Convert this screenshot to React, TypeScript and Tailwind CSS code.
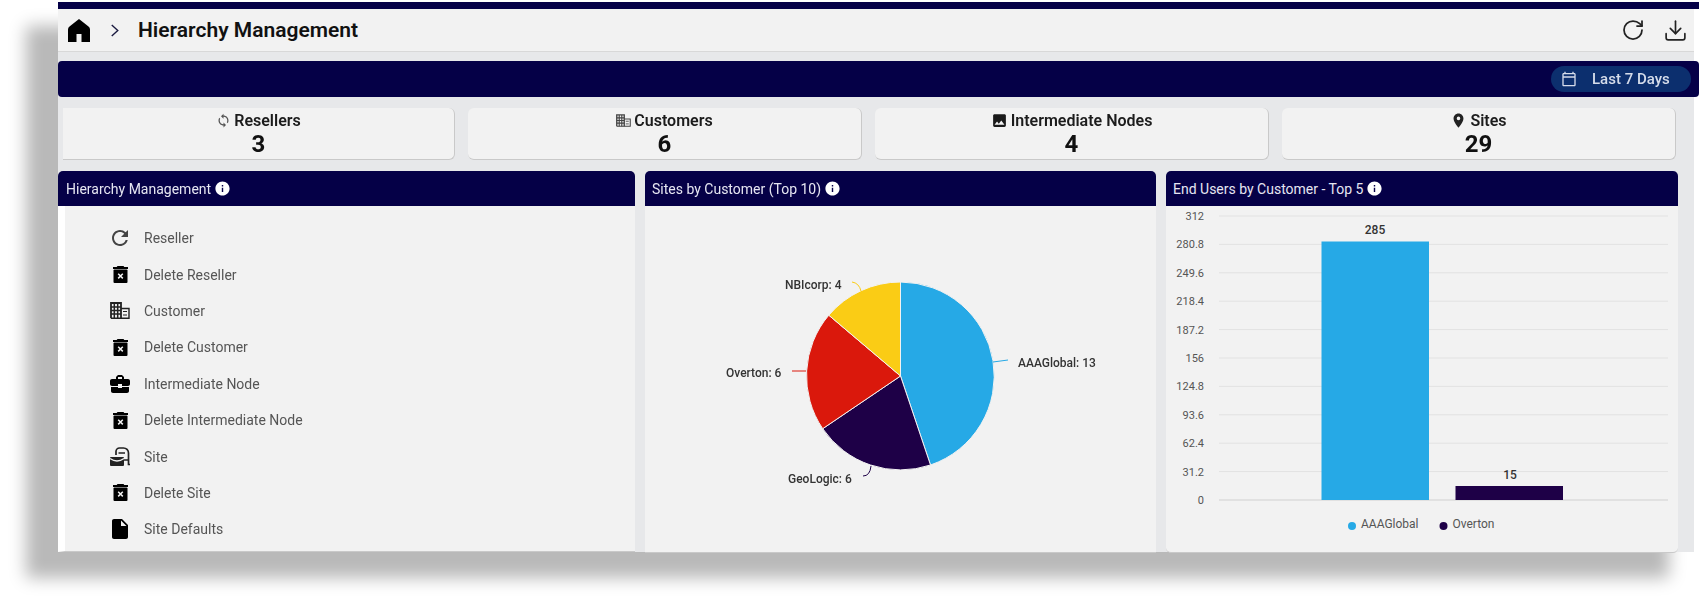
import React from 'react';
import { Download, RotateCw } from 'lucide-react';
import {
  MdBusinessCenter,
  MdInfo,
  MdInsertDriveFile,
  MdInsertPhoto,
  MdOutlineCalendarToday,
  MdPlace,
  MdRefresh,
  MdSync,
} from 'react-icons/md';

const BuildingIcon = ({ className }: { className?: string }) => (
  <svg viewBox="0 0 20 17" className={className} fill="none" stroke="currentColor">
    <path d="M1 16.200V1h10v15.200" strokeWidth="1.800" />
    <path d="M11 6.500h8v9.700H1" strokeWidth="1.400" />
    <path d="M1 5h10M1 8.500h10M1 12h10M4.300 1v15M7.700 1v15" strokeWidth="1.500" />
    <path d="M13 9.500h4M13 13h4" strokeWidth="1.100" />
  </svg>
);

const TrashIcon = () => (
  <svg viewBox="0 0 15 17" className="w-[15px] h-[17px]">
    <path d="M4.500 0h6l.8 1H15v2H0V1h3.700z" fill="#000" />
    <rect x="0.500" y="3.500" width="14" height="13.500" rx="1" fill="#000" />
    <path d="M5.200 7.800l4.600 4.600M9.800 7.800l-4.600 4.600" stroke="#f2f2f2" strokeWidth="1.500" />
  </svg>
);

const SiteIcon = ({ className }: { className?: string }) => (
  <svg viewBox="0 0 20 19" className={className}>
    <path d="M6 8V4.500A3.500 3.500 0 0 1 9.500 1h4A5 5 0 0 1 18.500 6v11.500H20" fill="none" stroke="currentColor" strokeWidth="1.700" />
    <path d="M8.500 6h6.500M14 13h4" fill="none" stroke="currentColor" strokeWidth="1.500" />
    <path d="M1 10h12a1 1 0 0 1 1 1v7a1 1 0 0 1-1 1H1a1 1 0 0 1-1-1v-7a1 1 0 0 1 1-1z" fill="currentColor" />
    <path d="M0 11.500Q7 16.500 14 11.500" fill="none" stroke="#f2f2f2" strokeWidth="1.300" />
  </svg>
);

const stats = [
  { label: 'Resellers', value: '3', icon: <MdSync className="text-[15px] text-[#555]" /> },
  { label: 'Customers', value: '6', icon: <BuildingIcon className="w-[15px] h-[13px] text-[#444]" /> },
  { label: 'Intermediate Nodes', value: '4', icon: <MdInsertPhoto className="text-[17px] text-[#1a1a1a]" /> },
  { label: 'Sites', value: '29', icon: <MdPlace className="text-[17px] text-[#222]" /> },
];

const trash = <TrashIcon />;

const menu = [
  { label: 'Reseller', icon: <MdRefresh className="text-[24px] text-[#444]" /> },
  { label: 'Delete Reseller', icon: trash },
  { label: 'Customer', icon: <BuildingIcon className="w-5 h-[17px] text-[#222]" /> },
  { label: 'Delete Customer', icon: trash },
  { label: 'Intermediate Node', icon: <MdBusinessCenter className="text-[24px] text-black" /> },
  { label: 'Delete Intermediate Node', icon: trash },
  { label: 'Site', icon: <SiteIcon className="w-5 h-[19px] text-[#222]" /> },
  { label: 'Delete Site', icon: trash },
  { label: 'Site Defaults', icon: <MdInsertDriveFile className="text-[24px] text-black" /> },
];

const ticks = ['312', '280.8', '249.6', '218.4', '187.2', '156', '124.8', '93.6', '62.4', '31.2', '0'];

const PanelHeader = ({ title, className }: { title: string; className: string }) => (
  <div className={`h-[35px] shrink-0 flex items-center gap-[3px] bg-[#050047] rounded-t-[5px] text-sm text-[#e6e6f2] ${className}`}>
    {title}
    <MdInfo className="text-[17px] text-white" />
  </div>
);

const PieChart = () => (
  <svg width="511" height="346">
    <g stroke="#f2f2f2" strokeWidth="1">
      <path d="M255.500 170V76A94 94 0 0 1 285.500 259Z" fill="#26a9e6" />
      <path d="M255.500 170L285.500 259A94 94 0 0 1 177.700 222.700Z" fill="#1e0047" />
      <path d="M255.500 170L177.700 222.700A94 94 0 0 1 183.800 109.200Z" fill="#da180c" />
      <path d="M255.500 170L183.800 109.200A94 94 0 0 1 255.500 76Z" fill="#facc15" />
    </g>
    <g fill="none" strokeWidth="1">
      <path d="M348 156L363 154" stroke="#26a9e6" />
      <path d="M147 165H161" stroke="#da180c" />
      <path d="M207 76Q214 77 216 85" stroke="#facc15" />
      <path d="M218 270Q225 270 226 260" stroke="#1e0047" />
    </g>
    <g fontSize="12" fontWeight="500" fill="#333">
      <text x="373" y="161">AAAGlobal: 13</text>
      <text x="81" y="171">Overton: 6</text>
      <text x="140" y="83">NBIcorp: 4</text>
      <text x="143" y="277">GeoLogic: 6</text>
    </g>
  </svg>
);

const BarChart = () => (
  <svg width="510" height="346">
    {ticks.map((t, i) => {
      const y = 10 + i * 28.4;
      return (
        <g key={t}>
          <line x1="53" x2="502" y1={y} y2={y} stroke={i === 10 ? '#d0d0d0' : '#e2e2e2'} />
          <text x="38" y={y + 4} textAnchor="end" fontSize="11" fill="#555">{t}</text>
        </g>
      );
    })}
    <rect x="155.500" y="35.500" width="107.500" height="258.500" fill="#26a9e6" />
    <rect x="289.500" y="280" width="107.500" height="14" fill="#1e0047" />
    <g fontSize="12" fontWeight="500" fill="#333" textAnchor="middle">
      <text x="209" y="28">285</text>
      <text x="344" y="273">15</text>
    </g>
    <circle cx="186" cy="320" r="4" fill="#26a9e6" />
    <circle cx="277.500" cy="320" r="4" fill="#1e0047" />
    <g fontSize="12" fill="#555">
      <text x="195" y="322">AAAGlobal</text>
      <text x="286.500" y="322">Overton</text>
    </g>
  </svg>
);

const App = () => {
  return (
    <div className="w-[1699px] h-[604px] overflow-hidden bg-white pl-[58px] pt-[2px] font-['Roboto',sans-serif]">
      <div className="h-[550px] flex flex-col bg-[#e7e8ea] border-r-[5px] border-white shadow-[-31px_25px_16px_1px_#b9b9b9] blur-[0.5px]">
        <div className="h-[7px] shrink-0 -mr-[5px] bg-[#050047]" />
        <header className="h-[43px] shrink-0 flex items-center bg-[#f2f2f2] border-b border-[#d8d8d8] pl-[10px] pr-[6px]">
          <svg viewBox="0 0 22 23" className="w-[22px] h-[23px] text-black">
            <path d="M11 0L1.500 7.500Q0 8.700 0 10.500V23h8.500v-8h5v8H22V10.500q0-1.800-1.500-3z" fill="currentColor" />
          </svg>
          <svg viewBox="0 0 10 14" className="w-[10px] h-[13px] ml-[20px] text-[#1a1a40]">
            <path d="M1.500 1L8 7L1.500 13" fill="none" stroke="currentColor" strokeWidth="1.500" />
          </svg>
          <h1 className="ml-[18px] mt-[1px] text-[21px] font-semibold text-[#111]">Hierarchy Management</h1>
          <div className="ml-auto flex items-center gap-[18px] text-[#222]">
            <RotateCw size={24} strokeWidth={1.75} />
            <Download size={25} strokeWidth={1.6} />
          </div>
        </header>
        <div className="h-[36px] shrink-0 mt-[9px] -mr-[5px] flex items-center justify-end pr-[8px] bg-[#050047] rounded-[4px]">
          <div className="w-[140px] h-[26px] flex items-center gap-[15px] pl-[10px] rounded-full bg-[#0c2f6e] text-[15px] font-medium text-[#d5dcea]">
            <MdOutlineCalendarToday className="text-[16px]" />
            Last 7 Days
          </div>
        </div>
        <div className="h-[52px] shrink-0 mt-[11px] ml-[5px] mr-[18px] flex gap-[13px]">
          {stats.map((s, i) => (
            <div
              key={s.label}
              className={`flex flex-col items-center justify-center bg-[#f2f2f2] rounded-[6px] border-b border-r border-[#c9c9c9] ${i === 0 ? 'w-[392px] rounded-l-none' : 'flex-1'}`}
            >
              <div className="flex items-center gap-[3px] text-base font-semibold leading-[20px] text-[#1c1c1c]">
                {s.icon}
                {s.label}
              </div>
              <div className="text-2xl font-bold leading-[26px] text-[#111]">{s.value}</div>
            </div>
          ))}
        </div>
        <div className="flex-1 min-h-0 mt-[11px] mr-[15px] flex gap-[10px]">
          <section className="w-[577px] flex flex-col">
            <PanelHeader title="Hierarchy Management" className="px-[8px]" />
            <ul className="flex-1 flex flex-col pt-[14px] pl-[37px] bg-[#f2f2f2] border-l-[7px] border-white border-b border-b-[#c9c9c9]">
              {menu.map((m) => (
                <li key={m.label} className="h-[36.400px] flex items-center text-sm text-[#555]">
                  <span className="w-[36px] flex justify-center">{m.icon}</span>
                  <span className="ml-[6px]">{m.label}</span>
                </li>
              ))}
            </ul>
          </section>
          <section className="w-[511px] flex flex-col">
            <PanelHeader title="Sites by Customer (Top 10)" className="px-[7px]" />
            <div className="flex-1 bg-[#f2f2f2] border-b border-[#c9c9c9]"><PieChart /></div>
          </section>
          <section className="w-[512px] flex flex-col">
            <PanelHeader title="End Users by Customer - Top 5" className="px-[7px]" />
            <div className="flex-1 bg-[#f2f2f2] border-b border-[#c9c9c9] rounded-b-[5px]"><BarChart /></div>
          </section>
        </div>
      </div>
    </div>
  );
};

export default App;
